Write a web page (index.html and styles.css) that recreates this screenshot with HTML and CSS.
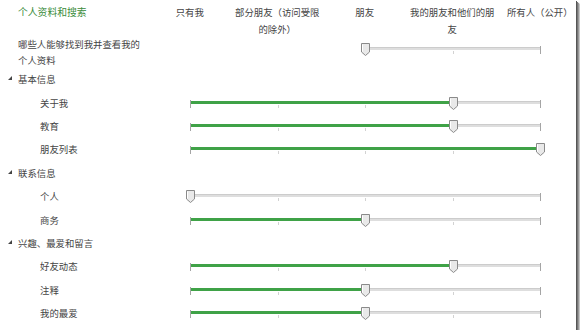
FILE: index.html
```html
<!DOCTYPE html>
<html lang="zh-CN">
<head>
<meta charset="utf-8">
<link rel="stylesheet" href="styles.css">
</head>
<body>
<div class="panel">
  <div class="head-row">
    <div class="title">个人资料和搜索</div>
    <div class="cols">
      <div class="col">只有我</div>
      <div class="col">部分朋友（访问受限的除外）</div>
      <div class="col">朋友</div>
      <div class="col">我的朋友和他们的朋友</div>
      <div class="col">所有人（公开）</div>
    </div>
  </div>

  <div class="row search-row">
    <div class="label top">哪些人能够找到我并查看我的<br>个人资料</div>
    <div class="slider search-slider" data-min="2" data-v="2"></div>
  </div>

  <div class="row section"><span class="tri"></span>基本信息</div>
  <div class="row"><div class="label sub">关于我</div><div class="slider" data-v="3"></div></div>
  <div class="row"><div class="label sub">教育</div><div class="slider" data-v="3"></div></div>
  <div class="row"><div class="label sub">朋友列表</div><div class="slider" data-v="4"></div></div>

  <div class="row section"><span class="tri"></span>联系信息</div>
  <div class="row"><div class="label sub">个人</div><div class="slider" data-v="0"></div></div>
  <div class="row"><div class="label sub">商务</div><div class="slider" data-v="2"></div></div>

  <div class="row section"><span class="tri"></span>兴趣、最爱和留言</div>
  <div class="row"><div class="label sub">好友动态</div><div class="slider" data-v="3"></div></div>
  <div class="row"><div class="label sub">注释</div><div class="slider" data-v="2"></div></div>
  <div class="row"><div class="label sub">我的最爱</div><div class="slider" data-v="2"></div></div>
</div>
<script src="app.js"></script>
</body>
</html>
```

FILE: app.js
```js
document.querySelectorAll('.slider').forEach(function (s) {
  var v = parseInt(s.getAttribute('data-v'), 10);
  var min = parseInt(s.getAttribute('data-min') || '0', 10);
  var step = 87.5;
  var x0 = min * step;
  var html = '<div class="track" style="left:' + x0 + 'px"></div>';
  if (v > min) {
    html += '<div class="fill" style="left:' + x0 + 'px;width:' + ((v - min) * step) + 'px"></div>';
  }
  for (var i = min; i < 5; i++) {
    var cls = (i === min || i === 4) ? 'tick end' : 'tick';
    html += '<div class="' + cls + '" style="left:' + (i * step) + 'px"></div>';
  }
  html += '<svg class="thumb" style="left:' + (v * step - 4) + 'px" width="9" height="13" viewBox="0 0 9 13">' +
    '<polygon points="0.5,0.5 8.5,0.5 8.5,9 4.5,12.5 0.5,9" fill="#e9e9e9" stroke="#8a8a8a" stroke-width="1"/>' +
    '<line x1="1.5" y1="1.5" x2="1.5" y2="8.5" stroke="#ffffff" stroke-width="1"/>' +
    '</svg>';
  s.innerHTML = html;
});
```

FILE: styles.css
```css
html, body {
  margin: 0;
  padding: 0;
  background: #ffffff;
}
body {
  font-family: "Noto Sans CJK SC", "Noto Sans", sans-serif;
  font-size: 9.4px;
  color: #444444;
}
.panel {
  width: 576px;
  height: 330px;
  background: #ffffff;
  box-shadow: 1px 1px 0 #555555, 2px 2px 0 #777777, 3px 3px 1px #999999, 4px 4px 1px #cfcfcf;
  overflow: visible;
  position: relative;
}
.head-row {
  display: flex;
  height: 36px;
  padding-top: 4px;
  box-sizing: border-box;
  line-height: 17px;
}
.title {
  flex: none;
  width: 146px;
  padding-left: 18px;
  box-sizing: border-box;
  color: #3a8c3a;
  font-size: 9.8px;
}
.cols {
  display: flex;
  flex: none;
}
.col {
  width: 87.5px;
  text-align: center;
  flex: none;
}
.row {
  display: flex;
  align-items: center;
  height: 23.4px;
}
.search-row {
  height: 31.5px;
  align-items: flex-start;
}
.label {
  width: 190px;
  flex: none;
  padding-left: 40px;
  box-sizing: border-box;
}
.label.top {
  padding-left: 18px;
  line-height: 16px;
}
.section {
  padding-left: 8px;
}
.tri {
  display: inline-block;
  width: 0;
  height: 0;
  border-left: 4px solid transparent;
  border-bottom: 4px solid #444444;
  margin-right: 6px;
  vertical-align: middle;
  position: relative;
  top: -1px;
}
.slider {
  position: relative;
  width: 350px;
  height: 14px;
  flex: none;
}
.search-slider {
  margin-top: 6px;
}
.track {
  position: absolute;
  left: 0;
  right: 0;
  top: 5px;
  height: 2px;
  background: #dedede;
  border-top: 1px solid #cccccc;
}
.fill {
  position: absolute;
  left: 0;
  top: 5px;
  height: 3px;
  background: #3fa247;
}
.tick {
  position: absolute;
  top: 9px;
  width: 1px;
  height: 3px;
  background: #d2d2d2;
}
.tick.end {
  top: 4px;
  height: 8px;
  background: #a5a5a5;
}
.thumb {
  position: absolute;
  top: 1px;
  z-index: 2;
}
```
